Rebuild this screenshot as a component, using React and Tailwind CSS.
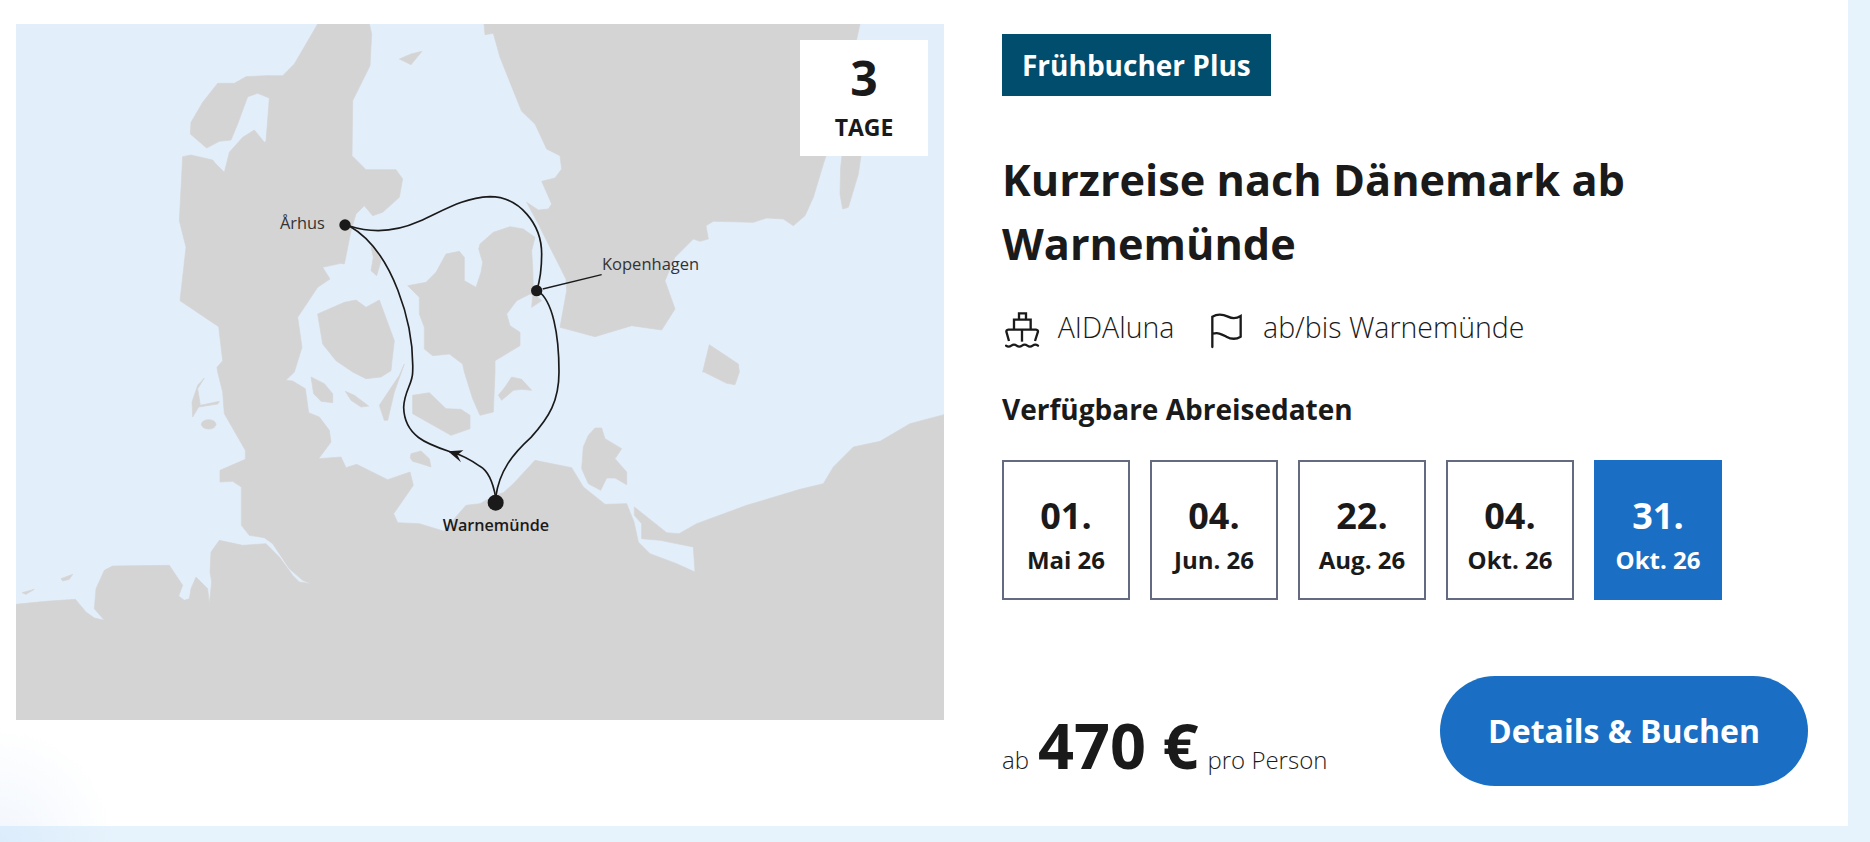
import React from "react";

const LAND = "#d4d4d4";

const mainland =
  "905,0 835,120 800,155 750,155 690,158 655,178 605,178 560,235 525,295 523,330 572,372 610,352 645,348 665,300 695,218 725,208 760,222 750,352 745,355 715,318 680,340 640,385 625,445 600,420 590,408 525,393 500,398 490,590 510,670 492,830 608,908 620,1010 603,1030 605,1044 620,1104 625,1169 688,1279 688,1306 612,1339 612,1374 650,1372 676,1389 676,1504 700,1534 745,1541 770,1559 820,1634 860,1669 885,1679 850,1674 830,1654 790,1599 750,1559 680,1564 610,1549 585,1584 582,1644 587,1674 580,1739 575,1694 540,1659 525,1694 520,1724 505,1729 488,1716 500,1684 460,1624 290,1626 265,1639 240,1694 235,1754 265,1789 235,1782 210,1764 178,1726 90,1732 0,1741 0,2088 2784,2088 2784,1172 2682,1199 2592,1252 2512,1269 2452,1329 2422,1379 2352,1396 2192,1444 2042,1499 1989,1529 1952,1526 1855,1449 1855,1474 1877,1499 1877,1544 1932,1549 2032,1569 2037,1644 1982,1619 1902,1589 1867,1554 1854,1494 1832,1439 1767,1441 1702,1389 1667,1331 1557,1309 1492,1379 1462,1406 1437,1414 1392,1439 1350,1444 1315,1484 1285,1522 1210,1499 1145,1496 1133,1469 1192,1384 1182,1344 1115,1367 1022,1321 990,1331 975,1299 908,1304 945,1254 940,1219 910,1179 878,1166 868,1094 830,1071 810,1069 835,1044 858,970 845,880 905,790 942,765 920,730 975,718 985,720 1005,620 1020,570 1045,545 1070,575 1100,565 1150,520 1160,465 1140,437 1050,437 1008,395 1010,230 1030,190 1062,125 1067,30 1060,0";

const sweden =
  "1404,0 1407,32 1432,28 1452,100 1492,200 1517,262 1557,300 1592,375 1632,395 1637,435 1617,462 1577,472 1607,540 1597,555 1567,558 1532,535 1567,600 1607,680 1650,765 1652,800 1632,910 1737,938 1847,905 1937,918 1977,855 1947,770 1977,700 2032,645 2052,652 2077,645 2070,605 2092,592 2212,595 2252,582 2302,585 2332,605 2367,575 2392,520 2422,420 2452,330 2482,200 2512,90 2532,0";

const zealand =
  "1175,785 1230,775 1260,745 1290,690 1330,682 1345,700 1345,770 1380,790 1395,745 1400,715 1388,675 1392,660 1432,625 1482,608 1522,615 1557,640 1547,680 1550,730 1552,790 1547,850 1577,830 1560,815 1542,810 1502,830 1472,870 1482,905 1512,925 1512,965 1437,1010 1437,1044 1432,1164 1392,1174 1370,1124 1345,1044 1340,1020 1300,990 1250,995 1225,975 1225,910 1210,870 1210,820";

const islands = [
  "1150,105 1185,90 1218,82 1185,122",
  "1065,668 1075,670 1095,710 1082,755 1065,740 1072,700",
  "905,870 985,835 1020,828 1050,850 1090,828 1135,950 1128,1010 1125,1040 1095,1059 1050,1064 1010,1044 960,1010 920,960",
  "2482,360 2540,360 2527,450 2497,550 2480,555 2472,510 2474,430",
  "2060,1044 2080,962 2167,1020 2170,1044 2157,1082 2132,1078 2064,1044",
];

// lower left part of the map
const islandsSw = [
  "885,15 925,35 950,65 950,92 915,88 893,65",
  "988,58 1015,70 1058,102 1035,105 1005,85",
  "1165,-24 1150,10 1090,100 1105,145 1115,145 1135,60",
  "1190,70 1240,62 1290,110 1335,112 1362,130 1362,170 1305,190 1190,125",
  "1185,245 1215,237 1240,260 1245,285 1215,275 1190,268 1183,258",
  "565,18 545,50 553,100 610,88 605,96 548,105 530,135 528,90 545,40",
  "135,620 170,607 160,622 140,627",
  "18,662 55,652 30,667",
];

// lower right part of the map
const islandsSe = [
  "95,15 125,22 155,55 125,52 100,55 65,85 55,70 75,45",
  "345,168 365,168 375,200 425,230 405,260 440,300 440,338 405,318 380,318 362,355 325,335 305,290 310,225 325,190",
];

function RouteMap() {
  return (
    <svg viewBox="0 0 2784 2088" className="block w-full h-full">
      <rect width="2784" height="2088" fill="#e3eefb" />
      <g fill={LAND} stroke={LAND} strokeWidth="2" strokeLinejoin="round">
        <polygon points={mainland} />
        <polygon points={sweden} />
        <polygon points={zealand} />
        {islands.map((p) => (
          <polygon key={p} points={p} />
        ))}
        <g transform="translate(0 1044)">
          {islandsSw.map((p) => (
            <polygon key={p} points={p} />
          ))}
          <ellipse cx="578" cy="157" rx="22" ry="14" />
        </g>
        <g transform="translate(1392 1044)">
          {islandsSe.map((p) => (
            <polygon key={p} points={p} />
          ))}
        </g>
      </g>
      <g fill="none" stroke="#1a1a1a" strokeWidth="5">
        <path d="M1000 606 C1060 625 1130 628 1210 592 S1340 522 1422 518 C1510 518 1577 600 1577 690 C1577 730 1572 770 1562 800" />
        <path d="M1565 800 C1610 830 1629 930 1629 1044 C1629 1130 1600 1180 1545 1240 C1490 1290 1450 1340 1439 1420" />
        <path d="M1439 1420 C1430 1370 1415 1340 1392 1327 C1365 1308 1335 1292 1305 1284 C1240 1262 1165 1240 1163 1150 C1165 1100 1190 1080 1190 1044 C1195 900 1130 680 1000 606" />
        <path d="M1580 795 L1757 752" strokeWidth="4" />
      </g>
      <g fill="#1a1a1a">
        <polygon points="1296,1282 1342,1279 1324,1293 1335,1315" />
        <circle cx="987" cy="603" r="17" />
        <circle cx="1562" cy="800" r="17" />
        <circle cx="1439" cy="1436" r="24" />
        <text x="792" y="614" fontSize="49" fill="#333">
          Århus
        </text>
        <text x="1758" y="737" fontSize="49.5" fill="#333">
          Kopenhagen
        </text>
        <text x="1280" y="1522" fontSize="48.5" fontWeight="600">
          Warnemünde
        </text>
      </g>
    </svg>
  );
}

function ShipIcon() {
  return (
    <svg
      viewBox="30 38 104 114"
      className="w-[34.67px] h-[38px]"
      fill="none"
      stroke="#1a1a1a"
      strokeWidth="7"
    >
      <path d="M72 62 V45 H93 V62" />
      <path d="M57 92 V64 H107 V92" />
      <path d="M42 128 L34 100 Q34 95 40 94 H123 Q129 95 129 100 L120 128" />
      <path d="M81 94 V130" />
      <path d="M33 142 q8 6 16 0 t16 0 t16 0 t16 0 t16 0 t16 0" strokeLinecap="round" />
    </svg>
  );
}

function FlagIcon() {
  return (
    <svg
      viewBox="30 35 110 115"
      className="w-[36.67px] h-[38.33px]"
      fill="none"
      stroke="#1a1a1a"
      strokeWidth="7"
      strokeLinecap="round"
    >
      <path d="M43 143 V52 C60 42 75 45 90 52 S115 58 128 50 V112 C115 120 100 120 85 112 S60 98 43 104" />
    </svg>
  );
}

function DateBox({ day, month, active }) {
  return (
    <div
      className={
        active
          ? "w-[128px] h-[140px] border-2 border-[#1a6fc4] bg-[#1a6fc4] text-white flex flex-col items-center pt-[32px]"
          : "w-[128px] h-[140px] border-2 border-[#646b80] text-[#1a1a1a] flex flex-col items-center pt-[32px]"
      }
    >
      <span className="text-[36px] leading-[44px] font-bold mb-[6px]">{day}</span>
      <span className="text-[24px] leading-[32px] font-bold">{month}</span>
    </div>
  );
}

export default function App() {
  return (
    <div className="relative w-[1870px] h-[842px] bg-[#e6f3fd] overflow-hidden text-[#1a1a1a] font-['Open_Sans',sans-serif]">
      <div className="w-[1848px] h-[826px] bg-white pl-4 pt-6 flex">
        <div className="relative w-[928px] h-[696px] shrink-0">
          <RouteMap />
          <div className="absolute top-4 right-4 w-[128px] h-[116px] bg-white flex flex-col items-center font-bold">
            <span className="text-[48px] leading-[64px] mt-[6px]">3</span>
            <span className="text-[23px] leading-[32px] mt-[1px]">TAGE</span>
          </div>
        </div>
        <div className="ml-[58px] mt-[10px] w-[806px]">
          <div className="inline-flex items-center h-[62px] w-[269px] px-[20px] bg-[#014d6e] text-white text-[28px] font-bold align-top whitespace-nowrap">
            Frühbucher Plus
          </div>
          <h2 className="mt-[52px] text-[43.25px] leading-[64px] font-bold">
            Kurzreise nach Dänemark ab
            <br />
            Warnemünde
          </h2>
          <div className="mt-[32px] flex items-center h-[38px] text-[28.5px] font-[350]">
            <span className="ml-[3px] mt-[6px]">
              <ShipIcon />
            </span>
            <span className="ml-[18px]">AIDAluna</span>
            <span className="ml-[34px] mt-[7px]">
              <FlagIcon />
            </span>
            <span className="ml-[18px]">ab/bis Warnemünde</span>
          </div>
          <h3 className="mt-[45px] text-[28px] leading-[36px] font-bold">Verfügbare Abreisedaten</h3>
          <div className="mt-[33px] flex gap-5">
            <DateBox day="01." month="Mai 26" />
            <DateBox day="04." month="Jun. 26" />
            <DateBox day="22." month="Aug. 26" />
            <DateBox day="04." month="Okt. 26" />
            <DateBox day="31." month="Okt. 26" active />
          </div>
          <div className="mt-[76px] flex justify-between items-end">
            <div className="flex items-baseline mb-[8px] font-[350] text-[24px]">
              <span>ab</span>
              <span className="mx-[9px] text-[63px] leading-[64px] font-bold">470 €</span>
              <span>pro Person</span>
            </div>
            <button className="w-[368px] h-[110px] rounded-[55px] bg-[#1a6fc4] text-white text-[32px] font-bold">
              Details &amp; Buchen
            </button>
          </div>
        </div>
      </div>
      <div className="absolute left-0 bottom-0 w-[130px] h-[140px] pointer-events-none bg-[radial-gradient(circle_at_0%_100%,rgba(170,200,240,0.16),transparent_115px)]" />
    </div>
  );
}
